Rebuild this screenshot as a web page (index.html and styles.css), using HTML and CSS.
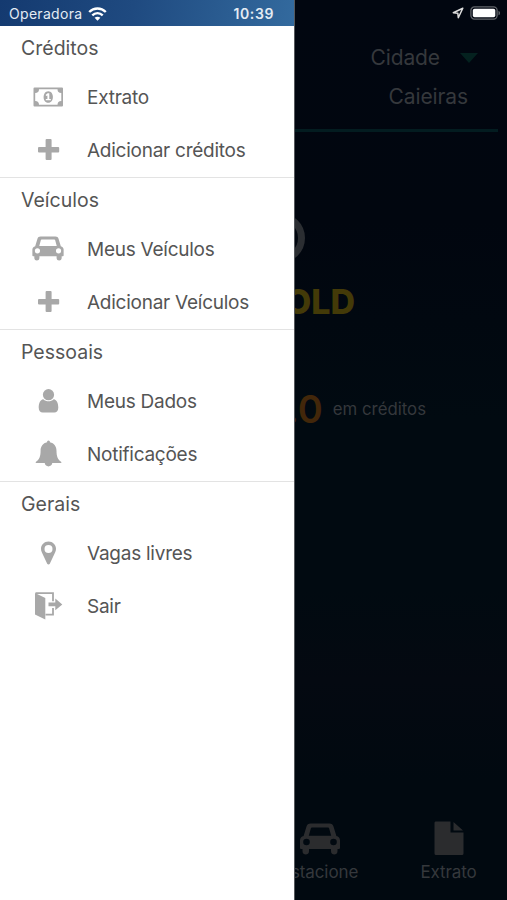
FILE: index.html
```html
<!DOCTYPE html>
<html lang="pt-BR">
<head>
    <meta charset="UTF-8">
    <meta name="viewport" content="width=device-width, initial-scale=1.0">
    <title>Menu</title>
    <link rel="stylesheet" href="styles.css">
</head>
<body>
    <!-- icons used more than once -->
    <svg class="icon-defs" width="0" height="0">
        <symbol id="icon-plus" viewBox="0 0 32 30">
            <path d="M14.600 4h4a1 1 0 0 1 1 1v7h6.600a1 1 0 0 1 1 1v3.600a1 1 0 0 1-1 1h-6.600v6.400a1 1 0 0 1-1 1h-4a1 1 0 0 1-1-1v-6.400H7a1 1 0 0 1-1-1V13a1 1 0 0 1 1-1h6.600V5a1 1 0 0 1 1-1z"/>
        </symbol>
        <symbol id="icon-car" viewBox="0 0 40 32">
            <path fill-rule="evenodd" d="M10.500 0.500h19c2.200 0 3.400 1 4 3l2.900 9.500c2.200.500 3.600 2.200 3.600 4.400v7.600c0 .500-.400.900-.900.900h-1.600v2.300c0 4.300-6.500 4.300-6.500 0v-2.300H9v2.300c0 4.300-6.500 4.300-6.500 0v-2.300H.900c-.500 0-.900-.400-.900-.900v-7.600c0-2.200 1.400-3.900 3.600-4.400L6.500 3.500c.600-2 1.800-3 4-3zM10.900 5.200L8.800 12.800h22.400L29.100 5.200c-.200-.600-.400-.800-1-.800H11.900c-.600 0-.800.200-1 .800zM6.500 15.700a3.300 3.300 0 1 0 0 6.600 3.300 3.300 0 0 0 0-6.600zM33.500 15.700a3.300 3.300 0 1 0 0 6.600 3.300 3.300 0 0 0 0-6.600z"/>
        </symbol>
    </svg>

    <div class="app">
        <div class="status-icons">
            <svg class="icon-location" viewBox="0 0 12 12"><path d="M10.800 1.200L1.300 5.700l4.500.5.500 4.500z"/></svg>
            <svg class="icon-battery" viewBox="0 0 31 14">
                <rect class="battery-case" x="0.900" y="0.900" width="26.200" height="12.200" rx="3.500"/>
                <rect class="battery-level" x="2.800" y="2.700" width="22.500" height="8.600" rx="1.800"/>
                <path class="battery-tip" d="M28.500 4.700c2 .8 2 3.800 0 4.600z"/>
            </svg>
        </div>

        <div class="city">
            <div class="city-label"><span>Cidade</span><i class="caret"></i></div>
            <div class="city-name">Caieiras</div>
        </div>

        <div class="plan">
            <div class="plan-ring"></div>
            <div class="plan-name">GOLD</div>
        </div>

        <div class="balance">
            <span class="balance-value">0.0</span>
            <span class="balance-text">em créditos</span>
        </div>

        <div class="tab-bar">
            <div class="tab">
                <svg class="tab-icon"><use href="#icon-car"/></svg>
                <span>Estacione</span>
            </div>
            <div class="tab">
                <svg class="tab-icon" viewBox="0 0 40 36">
                    <path d="M6.500 0.500h15v11h13v21a1.500 1.500 0 0 1-1.500 1.500h-26a1.500 1.500 0 0 1-1.500-1.500v-30.500a1.500 1.500 0 0 1 1-1.500zM24.500 1l9.500 8.600h-9.500z"/>
                </svg>
                <span>Extrato</span>
            </div>
        </div>
    </div>

    <div class="drawer">
        <div class="status-bar">
            <span class="carrier">Operadora</span>
            <svg class="icon-wifi" viewBox="0 0 19 14">
                <path class="wifi-arc" d="M1.200 5c4.700-4.600 11.900-4.600 16.600 0M4.300 8.300c3-2.900 7.400-2.900 10.400 0"/>
                <path class="wifi-dot" d="M9.500 13.800l-2.900-3c1.700-1.500 4.100-1.500 5.800 0z"/>
            </svg>
            <span class="clock">10:39</span>
        </div>

        <div class="section">
            <h2>Créditos</h2>
            <ul>
                <li>
                    <svg class="icon" viewBox="0 0 32 30">
                        <path fill-rule="evenodd" d="M2.500 5.500h27.500a1 1 0 0 1 1 1v17a1 1 0 0 1-1 1h-27.500a1 1 0 0 1-1-1v-17a1 1 0 0 1 1-1zM7 7.200a3.800 3.800 0 0 1-3.800 3.800v8a3.800 3.800 0 0 1 3.800 3.800h18.500a3.800 3.800 0 0 1 3.800-3.800v-8a3.800 3.800 0 0 1-3.800-3.800z"/>
                        <path fill-rule="evenodd" d="M16.300 9.200c6.200 0 6.200 11.600 0 11.600s-6.200-11.600 0-11.600zM15.600 11.300l-2 1.700.8 1.100 1-.7v3.500h-1.600v1.400h5v-1.400h-1.500v-5.600z"/>
                    </svg>
                    <span>Extrato</span>
                </li>
                <li>
                    <svg class="icon"><use href="#icon-plus"/></svg>
                    <span>Adicionar créditos</span>
                </li>
            </ul>
        </div>

        <div class="section">
            <h2>Veículos</h2>
            <ul>
                <li>
                    <svg class="icon icon-car"><use href="#icon-car"/></svg>
                    <span>Meus Veículos</span>
                </li>
                <li>
                    <svg class="icon"><use href="#icon-plus"/></svg>
                    <span>Adicionar Veículos</span>
                </li>
            </ul>
        </div>

        <div class="section">
            <h2>Pessoais</h2>
            <ul>
                <li>
                    <svg class="icon" viewBox="0 0 32 30">
                        <circle cx="16.500" cy="8.700" r="5.600"/>
                        <path d="M11.300 13.200c3 2.700 7.400 2.700 10.400 0 3.200.5 4.600 4 4.600 8.300 0 3.300-1.600 5-4 5H10.700c-2.400 0-4-1.700-4-5 0-4.300 1.400-7.800 4.600-8.300z"/>
                    </svg>
                    <span>Meus Dados</span>
                </li>
                <li>
                    <svg class="icon" viewBox="0 0 32 30">
                        <path d="M16.500 1.500c.9 0 1.500.7 1.400 1.800 4.300.9 6.600 4.200 6.600 8.400 0 6 1.500 8.800 4.600 11 .6.500.3 1.400-.5 1.400h-8.300c-.6 4.400-7 4.400-7.600 0H4.500c-.8 0-1.100-.9-.5-1.400 3.100-2.200 4.600-5 4.600-11 0-4.200 2.300-7.500 6.500-8.400-.1-1.100.5-1.800 1.400-1.800z"/>
                    </svg>
                    <span>Notificações</span>
                </li>
            </ul>
        </div>

        <div class="section">
            <h2>Gerais</h2>
            <ul>
                <li>
                    <svg class="icon" viewBox="0 0 32 30">
                        <path fill-rule="evenodd" d="M16.500 3.500c4.300 0 7.500 3.300 7.500 7.300 0 1.300-.2 2.300-.8 3.400l-5.400 11.500c-.5 1.100-2.100 1.100-2.600 0L9.800 14.200c-.6-1.100-.8-2.100-.8-3.400 0-4 3.200-7.300 7.500-7.300zM16.500 7a4 4 0 1 0 0 8 4 4 0 0 0 0-8z"/>
                    </svg>
                    <span>Vagas livres</span>
                </li>
                <li>
                    <svg class="icon" viewBox="0 0 32 30">
                        <path d="M3 2l10.300 5v21.500L3 23.500z"/>
                        <path class="door-frame" d="M3.500 2.200H21v8M21 17v6.700h-7.500"/>
                        <path d="M16.500 11.500h6.800V7.500l7 5.900-7 5.900v-4h-6.800z"/>
                    </svg>
                    <span>Sair</span>
                </li>
            </ul>
        </div>
    </div>
</body>
</html>
```

FILE: styles.css
```css
body {
    margin: 0;
    padding: 0;
    position: relative;
    width: 507px;
    height: 900px;
    overflow: hidden;
    font-family: Inter, "Liberation Sans", sans-serif;
    background-color: #010911;
}

.icon-defs {
    position: absolute;
}

/* dimmed page under the menu */
.app {
    display: flex;
    flex-direction: column;
    height: 900px;
    color: #35383c;
    background: linear-gradient(#010610 0, #01060f 220px, #010a11 420px, #010a11 590px, #040911 680px, #010910 780px, #010910 100%);
}

.status-icons {
    display: flex;
    justify-content: flex-end;
    align-items: center;
    gap: 6px;
    height: 26px;
    padding-right: 6px;
}

.icon-location {
    width: 12px;
    height: 12px;
    fill: none;
    stroke: #ddd;
    stroke-width: 1.5;
    stroke-linejoin: round;
}

.icon-battery {
    width: 31px;
    height: 14px;
}

.battery-case {
    fill: none;
    stroke: #62656a;
    stroke-width: 1.3;
}

.battery-level {
    fill: #fff;
}

.battery-tip {
    fill: #62656a;
}

.city {
    display: flex;
    flex-direction: column;
    align-items: flex-end;
    height: 106px;
    margin-right: 9px;
    padding: 12px 30px 0 0;
    border-bottom: 3px solid #031c20;
    box-sizing: border-box;
    font-size: 21px;
    line-height: 39px;
    letter-spacing: -0.1px;
}

.city-label {
    display: flex;
    align-items: center;
    gap: 20px;
    margin-right: -10px;
}

.caret {
    border-left: 9px solid transparent;
    border-right: 9px solid transparent;
    border-top: 10px solid #04211f;
}

.plan {
    display: flex;
    flex-direction: column;
    align-items: center;
    padding-top: 81px;
}

.plan-ring {
    box-sizing: border-box;
    width: 50px;
    height: 50px;
    margin-left: 52px;
    border: 7px solid #2b2e32;
    border-radius: 50%;
}

.plan-name {
    width: 104px;
    margin-top: 17px;
    padding-left: 116px;
    font-size: 34px;
    font-weight: 800;
    line-height: 44px;
    color: #433a08;
}

.balance {
    display: flex;
    justify-content: flex-end;
    align-items: center;
    gap: 10px;
    margin-top: 61px;
    padding-right: 81px;
    line-height: 48px;
}

.balance-value {
    font-size: 38px;
    font-weight: 600;
    color: #42270a;
}

.balance-text {
    font-size: 16.8px;
}

.tab-bar {
    display: flex;
    justify-content: flex-end;
    margin: auto -6px 0 0;
    padding-bottom: 17px;
}

.tab {
    display: flex;
    flex-direction: column;
    align-items: center;
    gap: 4px;
    width: 129px;
    font-size: 17px;
    line-height: 22px;
    letter-spacing: -0.1px;
}

.tab-icon {
    width: 40px;
    height: 36px;
    fill: #2b2c2e;
}

/* side menu */
.drawer {
    position: absolute;
    top: 0;
    left: 0;
    width: 295px;
    height: 900px;
    background-color: #fff;
    border-right: 1px solid #55585c;
    box-sizing: border-box;
}

.status-bar {
    display: flex;
    align-items: center;
    height: 26px;
    padding: 1px 20px 0 9px;
    box-sizing: border-box;
    color: #e4ebf3;
    background: linear-gradient(100deg, #143a70 0%, #1f4a80 45%, #336a9e 100%);
}

.carrier {
    font-size: 14px;
    letter-spacing: 0.3px;
}

.icon-wifi {
    width: 19px;
    height: 14px;
    margin-left: 6px;
}

.wifi-arc {
    fill: none;
    stroke: #fff;
    stroke-width: 2.4;
}

.wifi-dot {
    fill: #fff;
}

.clock {
    margin-left: auto;
    font-size: 14px;
    font-weight: 600;
    letter-spacing: 0.6px;
}

.section {
    border-bottom: 1px solid #e3e3e3;
}

.section:last-child {
    border-bottom: none;
}

.section h2 {
    margin: 0;
    padding-left: 21px;
    font-size: 19.5px;
    font-weight: 400;
    line-height: 44px;
    color: #555;
}

.section ul {
    list-style-type: none;
    margin: 0;
    padding: 0;
}

.section li {
    display: flex;
    align-items: center;
    gap: 23px;
    height: 53.5px;
    padding-left: 32px;
    font-size: 19px;
    letter-spacing: -0.25px;
    color: #555;
}

.section li span {
    padding-top: 1px;
}

.icon {
    width: 32px;
    height: 30px;
    fill: #a8a8a8;
}

.icon-car {
    height: 25px;
}

.door-frame {
    fill: none;
    stroke: #a8a8a8;
    stroke-width: 1.8;
}
```
